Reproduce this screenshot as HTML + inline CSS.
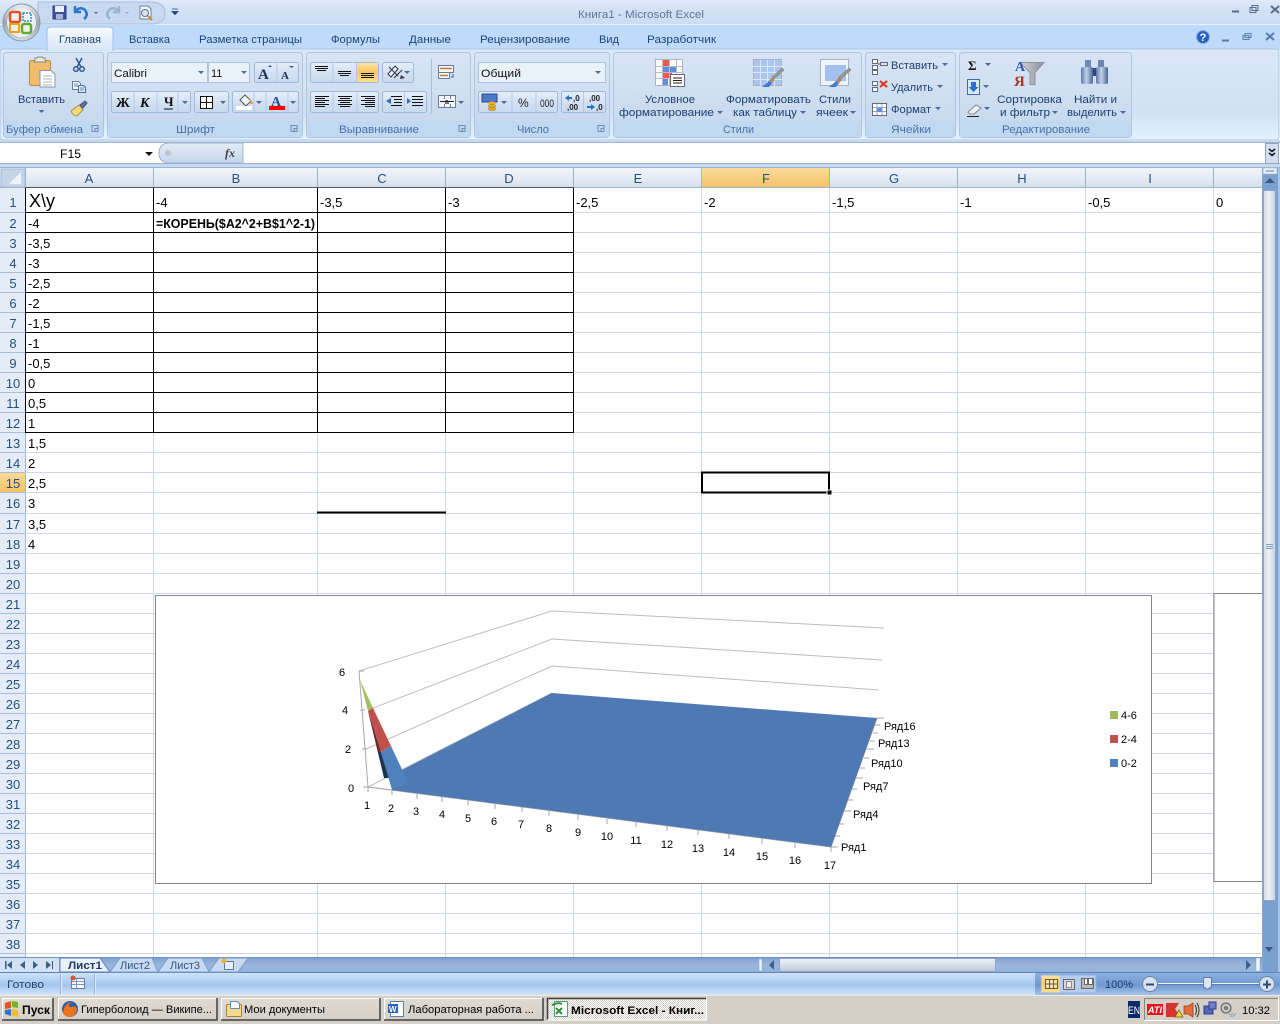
<!DOCTYPE html>
<html lang="ru"><head><meta charset="utf-8"><title>Книга1 - Microsoft Excel</title>
<style>
html,body{margin:0;padding:0;width:1280px;height:1024px;overflow:hidden;background:#fff}
svg{display:block;position:absolute;left:0;top:0}
text{font-family:"Liberation Sans","DejaVu Sans",sans-serif;font-size:11px;fill:#1c3f70}
.t{fill:#1d4477;font-size:11px}
.g{fill:#4a6fa5;font-size:11px}
.c{fill:#000;font-size:13px}
.h{fill:#24507f;font-size:13px;text-anchor:middle}
.ch{fill:#111;font-size:11px}
.tb{fill:#000;font-size:11px}
.box{fill:#e9f1fb;stroke:#abc3e0}
.bt{fill:url(#btn);stroke:#9fb9d8}
.grp{fill:url(#grp);stroke:#aec6e2}
.str{fill:#c1d8f1}
.a{fill:#4a6a97}
</style></head><body>
<svg width="1280" height="1024" viewBox="0 0 1280 1024" xmlns="http://www.w3.org/2000/svg">
<defs>
<linearGradient id="title" x1="0" x2="0" y1="0" y2="1"><stop offset="0" stop-color="#dfeafa"/><stop offset=".35" stop-color="#d3e2f5"/><stop offset="1" stop-color="#cadcf3"/></linearGradient>
<linearGradient id="rib" x1="0" x2="0" y1="0" y2="1"><stop offset="0" stop-color="#dbe7f6"/><stop offset=".7" stop-color="#d0e1f4"/><stop offset="1" stop-color="#e3f3fd"/></linearGradient>
<linearGradient id="grp" x1="0" x2="0" y1="0" y2="1"><stop offset="0" stop-color="#d8e4f4"/><stop offset="1" stop-color="#c5d8ee"/></linearGradient>
<linearGradient id="btn" x1="0" x2="0" y1="0" y2="1"><stop offset="0" stop-color="#e6effa"/><stop offset=".5" stop-color="#d3e1f3"/><stop offset="1" stop-color="#c8daf0"/></linearGradient>
<linearGradient id="org" x1="0" x2="0" y1="0" y2="1"><stop offset="0" stop-color="#fde4a8"/><stop offset=".45" stop-color="#fbc862"/><stop offset="1" stop-color="#fde08e"/></linearGradient>
<linearGradient id="hd" x1="0" x2="0" y1="0" y2="1"><stop offset="0" stop-color="#f2f6fb"/><stop offset=".6" stop-color="#e2e9f3"/><stop offset="1" stop-color="#d3deec"/></linearGradient>
<linearGradient id="hdo" x1="0" x2="0" y1="0" y2="1"><stop offset="0" stop-color="#fbdc9e"/><stop offset="1" stop-color="#f5c162"/></linearGradient>
<linearGradient id="tab" x1="0" x2="0" y1="0" y2="1"><stop offset="0" stop-color="#f6fafe"/><stop offset="1" stop-color="#d8e6f6"/></linearGradient>
<linearGradient id="sb" x1="0" x2="0" y1="0" y2="1"><stop offset="0" stop-color="#cfe2f9"/><stop offset=".3" stop-color="#b6d3f3"/><stop offset=".55" stop-color="#a5c6ee"/><stop offset="1" stop-color="#d2e5f9"/></linearGradient>
<linearGradient id="sb2" x1="0" x2="0" y1="0" y2="1"><stop offset="0" stop-color="#8db1e2"/><stop offset=".55" stop-color="#6f98d0"/><stop offset="1" stop-color="#a5c4ec"/></linearGradient>
<linearGradient id="tbar" x1="0" x2="0" y1="0" y2="1"><stop offset="0" stop-color="#7d9fce"/><stop offset=".5" stop-color="#9ab7dc"/><stop offset="1" stop-color="#94b1d8"/></linearGradient>
<linearGradient id="thumbH" x1="0" x2="0" y1="0" y2="1"><stop offset="0" stop-color="#eef2f8"/><stop offset=".5" stop-color="#d5deeb"/><stop offset="1" stop-color="#bcc9dc"/></linearGradient>
<linearGradient id="thumbV" x1="0" x2="1" y1="0" y2="0"><stop offset="0" stop-color="#d0d9e6"/><stop offset=".45" stop-color="#eef2f8"/><stop offset="1" stop-color="#c4d0e0"/></linearGradient>
<linearGradient id="orb" x1="0" x2="0" y1="0" y2="1"><stop offset="0" stop-color="#e8edf2"/><stop offset=".5" stop-color="#9aa6b2"/><stop offset="1" stop-color="#d2dae2"/></linearGradient>
<linearGradient id="fx" x1="0" x2="0" y1="0" y2="1"><stop offset="0" stop-color="#e4ecf7"/><stop offset="1" stop-color="#c4d6ec"/></linearGradient>
<linearGradient id="tbtn" x1="0" x2="0" y1="0" y2="1"><stop offset="0" stop-color="#dfdbd3"/><stop offset="1" stop-color="#d4d0c8"/></linearGradient>
<linearGradient id="bino" x1="0" x2="1" y1="0" y2="0"><stop offset="0" stop-color="#5d78a8"/><stop offset=".45" stop-color="#c3d2e8"/><stop offset="1" stop-color="#4a6494"/></linearGradient>
<linearGradient id="funnel" x1="0" x2="1" y1="0" y2="0"><stop offset="0" stop-color="#d0d4da"/><stop offset="1" stop-color="#8d939d"/></linearGradient>
<pattern id="dith" width="2" height="2" patternUnits="userSpaceOnUse"><rect width="2" height="2" fill="#fff"/><rect width="1" height="1" fill="#d4d0c8"/><rect x="1" y="1" width="1" height="1" fill="#d4d0c8"/></pattern>
</defs>

<!-- window chrome -->
<rect width="1280" height="25" fill="url(#title)"/>
<rect y="24" width="1280" height="1" fill="#eaf2fc"/>
<rect y="25" width="1280" height="25" fill="#bfdbfb"/>
<rect x="0" y="49" width="1279" height="91" rx="3" fill="url(#rib)" stroke="#a9c5e6"/>

<!-- quick access -->
<path d="M38 2H150Q165 2 165 13Q165 24 150 24H38Z" fill="#c7daf2" stroke="#a7bfdd"/>
<rect x="53" y="6" width="13" height="13" fill="#3d53a0" stroke="#2c3f85"/><rect x="55" y="6" width="9" height="6" fill="#eef"/><rect x="56" y="14" width="7" height="5" fill="#aab3d6"/>
<path d="M76 11Q80 6 85 10Q89 15 84 19M75 6V12H81" fill="none" stroke="#2f74c9" stroke-width="2.5"/>
<path d="M94 12l4 0-2 2Z" class="a"/>
<path d="M118 11Q114 6 109 10Q105 15 110 19M119 6V12H113" fill="none" stroke="#9fb3cb" stroke-width="2.5"/>
<path d="M125 12l4 0-2 2Z" fill="#93a7c1"/>
<path d="M140 6h8l3 3v10h-11Z" fill="#f6f8fb" stroke="#6e7f99"/><circle cx="145" cy="13" r="3.5" fill="#d4e6f8" stroke="#5d6d85"/><path d="M148 16l4 4" stroke="#c8862a" stroke-width="2"/>
<path d="M172 9h6M172 11.500l6 0 -3 3Z" fill="#26426e" stroke="#26426e" stroke-width=".8"/>

<!-- office button -->
<circle cx="21.500" cy="22.500" r="18.500" fill="url(#orb)" stroke="#8a96a4"/>
<circle cx="21.500" cy="22.500" r="14.500" fill="#eef1f3"/>
<rect x="10" y="12" width="10" height="10" rx="2" fill="none" stroke="#e0521f" stroke-width="2.500"/>
<rect x="23" y="13" width="8" height="8" fill="none" stroke="#2f8fd2" stroke-width="1.500" stroke-dasharray="2 1"/>
<rect x="10" y="24" width="9" height="8" fill="none" stroke="#f0a020" stroke-width="2"/>
<rect x="22" y="24" width="9" height="9" rx="2" fill="none" stroke="#5bab2d" stroke-width="2.500"/>

<text x="578" y="18" font-size="11" textLength="126" lengthAdjust="spacingAndGlyphs" style="fill:#5f7693">Книга1  -  Microsoft Excel</text>
<g stroke="#5a6d88" fill="none"><path d="M1232 11.500h7" stroke-width="2"/><rect x="1250" y="7.500" width="6" height="5"/><rect x="1252" y="5.500" width="6" height="5"/><path d="M1271 6l8 7M1279 6l-8 7" stroke-width="2"/></g>

<!-- tabs -->
<path d="M47 50V31Q47 27 51 27H109Q113 27 113 31V50Z" fill="url(#tab)" stroke="#a3c1e3"/>
<rect x="48" y="48" width="64" height="3" fill="#dbe7f6"/>
<g class="t">
<text class="t" x="59" y="43" textLength="42" lengthAdjust="spacingAndGlyphs">Главная</text>
<text class="t" x="129" y="43" textLength="41" lengthAdjust="spacingAndGlyphs">Вставка</text>
<text class="t" x="199" y="43" textLength="103" lengthAdjust="spacingAndGlyphs">Разметка страницы</text>
<text class="t" x="331" y="43" textLength="49" lengthAdjust="spacingAndGlyphs">Формулы</text>
<text class="t" x="409" y="43" textLength="42" lengthAdjust="spacingAndGlyphs">Данные</text>
<text class="t" x="480" y="43" textLength="90" lengthAdjust="spacingAndGlyphs">Рецензирование</text>
<text class="t" x="599" y="43" textLength="20" lengthAdjust="spacingAndGlyphs">Вид</text>
<text class="t" x="647" y="43" textLength="69" lengthAdjust="spacingAndGlyphs">Разработчик</text>
</g>
<circle cx="1203" cy="37" r="6.500" fill="#2a62c4" stroke="#8fb0dc"/><text x="1203" y="41" text-anchor="middle" style="fill:#fff;font-size:11px;font-weight:bold">?</text>
<g stroke="#5a7da8" fill="none"><path d="M1222 40.500h7" stroke-width="2"/><rect x="1243" y="35.500" width="6" height="4"/><rect x="1245" y="33.500" width="6" height="4"/><path d="M1266 33l8 7M1274 33l-8 7" stroke-width="2"/></g>

<!-- groups -->
<rect class="grp" x="3.500" y="52.500" width="100" height="85" rx="3"/><rect class="str" x="4" y="121" width="99" height="16"/>
<rect class="grp" x="107.500" y="52.500" width="195" height="85" rx="3"/><rect class="str" x="108" y="121" width="194" height="16"/>
<rect class="grp" x="306.500" y="52.500" width="164" height="85" rx="3"/><rect class="str" x="307" y="121" width="163" height="16"/>
<rect class="grp" x="474.500" y="52.500" width="135" height="85" rx="3"/><rect class="str" x="475" y="121" width="134" height="16"/>
<rect class="grp" x="613.500" y="52.500" width="248" height="85" rx="3"/><rect class="str" x="614" y="121" width="247" height="16"/>
<rect class="grp" x="865.500" y="52.500" width="90" height="85" rx="3"/><rect class="str" x="866" y="121" width="89" height="16"/>
<rect class="grp" x="959.500" y="52.500" width="172" height="85" rx="3"/><rect class="str" x="960" y="121" width="171" height="16"/>

<text class="g" x="6" y="133" textLength="77" lengthAdjust="spacingAndGlyphs">Буфер обмена</text>
<text class="g" x="176" y="133" textLength="39" lengthAdjust="spacingAndGlyphs">Шрифт</text>
<text class="g" x="339" y="133" textLength="80" lengthAdjust="spacingAndGlyphs">Выравнивание</text>
<text class="g" x="517" y="133" textLength="32" lengthAdjust="spacingAndGlyphs">Число</text>
<text class="g" x="723" y="133" textLength="31" lengthAdjust="spacingAndGlyphs">Стили</text>
<text class="g" x="891" y="133" textLength="40" lengthAdjust="spacingAndGlyphs">Ячейки</text>
<text class="g" x="1002" y="133" textLength="88" lengthAdjust="spacingAndGlyphs">Редактирование</text>
<g fill="none" stroke="#6f8cb3"><path d="M92 125.500h6v6h-6zM95 128.500h3v3h-3z"/><path d="M291 125.500h6v6h-6zM294 128.500h3v3h-3z"/><path d="M459 125.500h6v6h-6zM462 128.500h3v3h-3z"/><path d="M598 125.500h6v6h-6zM601 128.500h3v3h-3z"/></g>

<!-- clipboard -->
<rect x="29.500" y="60.500" width="21" height="25" rx="2" fill="#f1bd6c" stroke="#b98a3f"/>
<path d="M35 60V58h2l1-1h4l1 1h2v2l1 2h-12Z" fill="#e8e8e4" stroke="#8d8d80"/>
<path d="M40 70.500h11l4 4v12.500h-15Z" fill="#fff" stroke="#8b97a8"/>
<path d="M43 76h9M43 79h9M43 82h9M43 85h9" stroke="#a9b4c2"/>
<text x="18" y="103" textLength="47" lengthAdjust="spacingAndGlyphs">Вставить</text>
<path d="M38.500 110h6l-3 3Z" class="a"/>
<g fill="none" stroke="#2f5793" stroke-width="1.500"><path d="M76 58l5 9M82 58l-5 9"/><circle cx="76" cy="69" r="2.300"/><circle cx="82" cy="69" r="2.300"/></g>
<path d="M72.500 81.500h6l2 2v6h-8Z" fill="#fff" stroke="#5e80ad"/><path d="M78.500 85.500h5l2 2v5h-7Z" fill="#e6f0fb" stroke="#3f68a0"/><path d="M74 84h4M74 86h4M80 88h4M80 90h4" stroke="#5e80ad"/>
<path d="M71 111l8-6 4 5-6 6q-4 0-6-5Z" fill="#f2d97f" stroke="#a7904a"/><path d="M80 105l5-4 2 2-4 5Z" fill="#6a6fa0" stroke="#4c4f7a"/>

<!-- font -->
<rect class="box" x="111.500" y="62.500" width="96" height="20"/><rect class="box" x="208.500" y="62.500" width="41" height="20"/>
<text class="ch" x="114" y="77" textLength="33" lengthAdjust="spacingAndGlyphs">Calibri</text>
<text class="ch" x="211" y="77">11</text>
<path d="M198 71h6l-3 3Z" class="a"/><path d="M241 71h6l-3 3Z" class="a"/>
<rect class="bt" x="254.500" y="62.500" width="44" height="20" rx="2"/><path d="M277 63v19" stroke="#b5c9e2"/>
<text x="258" y="79" style="font-family:'Liberation Serif',serif;font-weight:bold;font-size:15px;fill:#20304f">A</text>
<path d="M268 67l2-2 2 2Z" fill="#2d5a9e"/>
<text x="281" y="79" style="font-family:'Liberation Serif',serif;font-weight:bold;font-size:11px;fill:#20304f">A</text>
<path d="M289 66h5l-2.500 2Z" fill="#2d5a9e"/>
<rect class="bt" x="111.500" y="91.500" width="79" height="21" rx="2"/><path d="M134 92v20M157 92v20M178 92v20" stroke="#b5c9e2"/>
<text x="116" y="107" style="font-family:'Liberation Serif',serif;font-weight:bold;font-size:14px;fill:#111">Ж</text>
<text x="140" y="107" style="font-family:'Liberation Serif',serif;font-weight:bold;font-style:italic;font-size:14px;fill:#111">К</text>
<text x="164" y="106" style="font-family:'Liberation Serif',serif;font-weight:bold;font-size:13px;fill:#111">Ч</text><path d="M164 109h9" stroke="#111"/>
<path d="M182 101h6l-3 3Z" class="a"/>
<rect class="bt" x="194.500" y="91.500" width="34" height="21" rx="2"/><path d="M200.500 96.500h12v12h-12zM206.500 96.500v12M200.500 102.500h12" fill="#fff" stroke="#111"/><path d="M220 101h6l-3 3Z" class="a"/>
<rect class="bt" x="232.500" y="91.500" width="66" height="21" rx="2"/><path d="M254 92v20M266 92v20M288 92v20" stroke="#b5c9e2"/>
<path d="M240 100l5-5 6 6-5 5Z" fill="#f4f7fb" stroke="#555"/><path d="M249 98l3 4 1 2-2 0Z" fill="#e8941f"/>
<rect x="236" y="106" width="16" height="4" fill="#fff"/>
<path d="M256 101h6l-3 3Z" class="a"/>
<text x="271" y="106" style="font-family:'Liberation Serif',serif;font-weight:bold;font-size:14px;fill:#26508f">A</text><rect x="269" y="106" width="16" height="4" fill="#f00"/>
<path d="M290 101h6l-3 3Z" class="a"/>

<!-- alignment -->
<rect class="bt" x="310.500" y="62.500" width="68" height="20" rx="2"/><rect x="357" y="63" width="21" height="19" fill="url(#org)"/><path d="M333 63v19M356.500 63v19" stroke="#b5c9e2"/>
<g stroke="#111"><path d="M315 66.500h13M315 68.500h13M317 70.500h9"/><path d="M338 71.500h13M338 73.500h13M340 75.500h9"/><path d="M361 73.500h13M361 75.500h13M361 77.500h13"/></g>
<rect class="bt" x="382.500" y="62.500" width="31" height="20" rx="2"/>
<path d="M388 74l7-8 3 3-7 8ZM394 78l8-8M389 67l9 9" stroke="#334" stroke-width="1" fill="#eef2f8"/><path d="M401 75l4 3-5 1Z" fill="#334"/><path d="M404 71h6l-3 3Z" class="a"/>
<rect class="bt" x="310.500" y="91.500" width="68" height="21" rx="2"/><path d="M333 92v20M357 92v20" stroke="#b5c9e2"/>
<g stroke="#111"><path d="M315 96.500h14M315 98.500h10M315 100.500h14M315 102.500h10M315 104.500h14M315 106.500h10"/><path d="M338 96.500h14M340 98.500h10M338 100.500h14M340 102.500h10M338 104.500h14M340 106.500h10"/><path d="M361 96.500h14M365 98.500h10M361 100.500h14M365 102.500h10M361 104.500h14M365 106.500h10"/></g>
<rect class="bt" x="382.500" y="91.500" width="44" height="21" rx="2"/><path d="M404.500 92v20" stroke="#b5c9e2"/>
<g stroke="#111"><path d="M391 96.500h11M394 99.500h8M394 102.500h8M391 105.500h11"/><path d="M412 96.500h11M412 99.500h11M412 102.500h11M412 105.500h11"/></g>
<path d="M386 101l5-3v6Z" fill="#2b70c0"/><path d="M411 101l-4-3v6Z" fill="#2b70c0"/>
<path d="M431.500 59v55" stroke="#a8bedb"/>
<rect x="438.500" y="65.500" width="15" height="7" fill="#f4f7fb" stroke="#6a7c96"/><rect x="438.500" y="72.500" width="11" height="6" fill="#f4f7fb" stroke="#6a7c96"/><path d="M440 68.500h12" stroke="#c47c2d" stroke-width="1.500"/><path d="M440 75.500h8" stroke="#c47c2d" stroke-width="1.500"/><path d="M453 74v3h-2" fill="none" stroke="#2b5fa8"/>
<rect x="438.500" y="95.500" width="17" height="12" fill="#f4f7fb" stroke="#6a7c96"/><path d="M444.500 96v3M450.500 96v3M444.500 104v3M450.500 104v3" stroke="#6a7c96"/><path d="M440 101.500h14" stroke="#223"/><text x="445" y="104" style="font-size:7px;font-weight:bold;fill:#223">a</text><path d="M458 101h6l-3 3Z" class="a"/>

<!-- number -->
<rect class="box" x="478.500" y="62.500" width="127" height="20"/>
<text class="ch" x="481" y="77" textLength="40" lengthAdjust="spacingAndGlyphs">Общий</text>
<path d="M595 71h6l-3 3Z" class="a"/>
<rect class="bt" x="478.500" y="91.500" width="79" height="21" rx="2"/><path d="M512 92v20M536 92v20" stroke="#b5c9e2"/>
<rect x="482" y="94" width="15" height="8" fill="#4b78c8" stroke="#2b4a90"/><ellipse cx="492" cy="103" rx="4" ry="1.500" fill="#e8ad2a"/><ellipse cx="492" cy="106" rx="4" ry="1.500" fill="#e8ad2a" stroke="#a87515" stroke-width=".5"/><ellipse cx="492" cy="109" rx="4" ry="1.500" fill="#e8ad2a" stroke="#a87515" stroke-width=".5"/>
<path d="M501 101h6l-3 3Z" class="a"/>
<text x="518" y="107" style="font-size:12px;fill:#222">%</text>
<text x="540" y="107" textLength="14" lengthAdjust="spacingAndGlyphs" style="font-size:11px;fill:#222">000</text>
<rect class="bt" x="561.500" y="91.500" width="44" height="21" rx="2"/><path d="M583.500 92v20" stroke="#b5c9e2"/>
<text x="573" y="101" style="font-size:8px;fill:#222;font-weight:bold">,0</text><text x="567" y="110" style="font-size:8px;fill:#222;font-weight:bold">,00</text>
<text x="589" y="101" style="font-size:8px;fill:#222;font-weight:bold">,00</text><text x="596" y="110" style="font-size:8px;fill:#222;font-weight:bold">,0</text>
<path d="M565 98l4-3v2h3v2h-3v2Z" fill="#2b70c0"/><path d="M587 106h4v-2l4 3-4 3v-2h-4Z" fill="#2b70c0"/>

<!-- styles -->
<rect x="655.500" y="59.500" width="27" height="26" fill="#fff" stroke="#a8b2c0"/>
<rect x="662" y="60" width="7" height="6" fill="#f05a4a"/><rect x="662" y="66" width="14" height="6" fill="#5d8fdd"/><rect x="662" y="72" width="10" height="6" fill="#f05a4a"/><rect x="662" y="78" width="6" height="7" fill="#5d8fdd"/>
<path d="M662.500 60v25M669.500 60v25M676.500 60v25M656 66.500h26M656 72.500h26M656 78.500h26" stroke="#b2bccb"/>
<rect x="670.500" y="74.500" width="14" height="12" fill="#fff" stroke="#667"/><path d="M673 78h9M673 80.500h9M673 83h9" stroke="#222"/>
<rect x="753.500" y="59.500" width="28" height="26" fill="#a9c5f0" stroke="#a8b2c0"/><path d="M753 66.500h29M753 72.500h29M753 79.500h29M760.500 60v26M767.500 60v26M774.500 60v26" stroke="#dde6f5"/>
<path d="M784 70l-10 9-2-2 10-9Z" fill="#9a9a90" stroke="#6b6b60" stroke-width=".5"/><path d="M772 77l3 3-3 3-3-2Z" fill="#b08a5a"/><path d="M769 81l3 2-3 4-7 0 5-4Z" fill="#4479c9"/>
<rect x="820.500" y="59.500" width="28" height="26" fill="#eef4fc" stroke="#a8b2c0"/><rect x="825" y="65" width="21" height="16" fill="#a3c0ee"/>
<path d="M851 70l-10 9-2-2 10-9Z" fill="#9a9a90" stroke="#6b6b60" stroke-width=".5"/><path d="M839 77l3 3-3 3-3-2Z" fill="#b08a5a"/><path d="M836 81l3 2-3 4-7 0 5-4Z" fill="#4479c9"/>
<text x="645" y="103" textLength="50" lengthAdjust="spacingAndGlyphs">Условное</text>
<text x="619" y="116" textLength="95" lengthAdjust="spacingAndGlyphs">форматирование</text><path d="M717 111h6l-3 3Z" class="a"/>
<text x="726" y="103" textLength="85" lengthAdjust="spacingAndGlyphs">Форматировать</text>
<text x="733" y="116" textLength="64" lengthAdjust="spacingAndGlyphs">как таблицу</text><path d="M800 111h6l-3 3Z" class="a"/>
<text x="819" y="103" textLength="32" lengthAdjust="spacingAndGlyphs">Стили</text>
<text x="816" y="116" textLength="32" lengthAdjust="spacingAndGlyphs">ячеек</text><path d="M850 111h6l-3 3Z" class="a"/>

<!-- cells -->
<g stroke="#5a6d85" fill="#fff"><rect x="872.500" y="59.500" width="5" height="4"/><rect x="872.500" y="65.500" width="5" height="4"/><rect x="872.500" y="70.500" width="5" height="4"/><rect x="880.500" y="62.500" width="7" height="3" fill="#d8e4f5"/></g><path d="M878 64h3" stroke="#c22"/>
<text x="891" y="69" textLength="47" lengthAdjust="spacingAndGlyphs">Вставить</text><path d="M942 63h6l-3 3Z" class="a"/>
<g stroke="#5a6d85" fill="#fff"><rect x="872.500" y="81.500" width="5" height="4"/><rect x="872.500" y="87.500" width="5" height="4"/></g><path d="M880 81l7 6M887 81l-7 6" stroke="#e0321e" stroke-width="2"/>
<text x="891" y="91" textLength="42" lengthAdjust="spacingAndGlyphs">Удалить</text><path d="M937 85h6l-3 3Z" class="a"/>
<rect x="872.500" y="103.500" width="14" height="12" fill="#fff" stroke="#5a6d85"/><path d="M877 104v11M882 104v11M873 107.500h13M873 111.500h13" stroke="#98a5b8"/><rect x="877" y="108" width="5" height="4" fill="#5d8fdd"/>
<text x="891" y="113" textLength="40" lengthAdjust="spacingAndGlyphs">Формат</text><path d="M935 107h6l-3 3Z" class="a"/>

<!-- editing -->
<text x="968" y="70" style="font-family:'Liberation Serif',serif;font-size:13px;font-weight:bold;fill:#111">Σ</text><path d="M985 63h6l-3 3Z" class="a"/>
<rect x="967.500" y="79.500" width="12" height="15" fill="#dbe8f8" stroke="#3f6cb0"/><path d="M971 82h5v5h2.500l-5 5-5-5h2.500Z" fill="#2b70d0"/><path d="M983 85h6l-3 3Z" class="a"/>
<path d="M968 112l8-7 5 3-7 6h-4Z" fill="#eef1f5" stroke="#7d8894"/><path d="M967 116.500h12" stroke="#222"/><path d="M984 107h6l-3 3Z" class="a"/>
<path d="M1020 62.500h24l-9 10v12l-5 0v-12Z" fill="url(#funnel)" stroke="#8d939d"/>
<text x="1015" y="71" style="font-family:'Liberation Serif',serif;font-size:14px;font-weight:bold;fill:#2f5aa8">A</text>
<text x="1014" y="86" style="font-family:'Liberation Serif',serif;font-size:15px;font-weight:bold;fill:#a33a2c">Я</text>
<path d="M1085 60h6v7h-6ZM1098 60h6v7h-6Z" fill="#6f87b3"/>
<rect x="1081" y="67" width="12" height="17" rx="2" fill="url(#bino)"/><rect x="1096" y="67" width="12" height="17" rx="2" fill="url(#bino)"/><rect x="1093" y="68" width="3" height="8" fill="#2f4777"/>
<text x="997" y="103" textLength="65" lengthAdjust="spacingAndGlyphs">Сортировка</text>
<text x="1000" y="116" textLength="50" lengthAdjust="spacingAndGlyphs">и фильтр</text><path d="M1052 111h6l-3 3Z" class="a"/>
<text x="1074" y="103" textLength="43" lengthAdjust="spacingAndGlyphs">Найти и</text>
<text x="1067" y="116" textLength="50" lengthAdjust="spacingAndGlyphs">выделить</text><path d="M1120 111h6l-3 3Z" class="a"/>

<!-- formula bar -->
<rect y="140" width="1280" height="28" fill="#c6d9f0"/>
<rect x="0" y="143" width="1280" height="21" fill="#fff"/>
<path d="M0 142.500H1280M0 163.500H1280M0 167.500H1280" stroke="#9db4cf"/>
<text x="60" y="158" textLength="21" lengthAdjust="spacingAndGlyphs" style="fill:#000;font-size:12px">F15</text>
<path d="M145 152h8l-4 4Z" fill="#111"/>
<path d="M243 143H170Q159 143 159 153Q159 163 170 163H243Z" fill="url(#fx)" stroke="#9db4cf"/>
<circle cx="168" cy="153" r="3" fill="#b9c5d3"/>
<text x="225" y="157" style="font-family:'Liberation Serif',serif;font-style:italic;font-weight:bold;font-size:12px;fill:#444">fx</text>
<rect x="1265.500" y="143.500" width="13" height="20" fill="#d0dff2" stroke="#8da6c4"/>
<path d="M1269 149l3 2.500 3-2.500M1269 153l3 2.500 3-2.500" fill="none" stroke="#111" stroke-width="1.500"/>

<!-- grid -->
<rect x="0" y="168" width="1262" height="20" fill="url(#hd)"/>
<rect x="0" y="188" width="25" height="769" fill="#e4ecf7"/>
<rect x="701" y="168" width="129" height="20" fill="url(#hdo)"/>
<rect x="0" y="472" width="25" height="21" fill="url(#hdo)"/>
<rect x="1" y="169" width="24" height="18" fill="#c4d5ea" stroke="#a5bcd8"/>
<path d="M21 172v12h-12Z" fill="#eef3fa"/>
<path d="M25.500 168V957M153.500 168V188M317.500 168V188M445.500 168V188M573.500 168V188M701.500 168V188M829.500 168V188M957.500 168V188M1085.500 168V188M1213.500 168V188" stroke="#9eb6ce"/>
<path d="M153.500 188V957M317.500 188V957M445.500 188V957M573.500 188V957M701.500 188V957M829.500 188V957M957.500 188V957M1085.500 188V957M1213.500 188V957" stroke="#d0d7e5"/>
<path d="M25 212.500H1262M25 232.500H1262M25 252.500H1262M25 272.500H1262M25 292.500H1262M25 312.500H1262M25 332.500H1262M25 352.500H1262M25 372.500H1262M25 392.500H1262M25 412.500H1262M25 432.500H1262M25 452.500H1262M25 472.500H1262M25 492.500H1262M25 513.500H1262M25 533.500H1262M25 553.500H1262M25 573.500H1262M25 593.500H1262M25 613.500H1262M25 633.500H1262M25 653.500H1262M25 673.500H1262M25 693.500H1262M25 713.500H1262M25 733.500H1262M25 753.500H1262M25 773.500H1262M25 793.500H1262M25 813.500H1262M25 833.500H1262M25 853.500H1262M25 873.500H1262M25 893.500H1262M25 913.500H1262M25 933.500H1262M25 953.500H1262" stroke="#d0d7e5"/>
<path d="M0 212.500H25M0 232.500H25M0 252.500H25M0 272.500H25M0 292.500H25M0 312.500H25M0 332.500H25M0 352.500H25M0 372.500H25M0 392.500H25M0 412.500H25M0 432.500H25M0 452.500H25M0 472.500H25M0 492.500H25M0 513.500H25M0 533.500H25M0 553.500H25M0 573.500H25M0 593.500H25M0 613.500H25M0 633.500H25M0 653.500H25M0 673.500H25M0 693.500H25M0 713.500H25M0 733.500H25M0 753.500H25M0 773.500H25M0 793.500H25M0 813.500H25M0 833.500H25M0 853.500H25M0 873.500H25M0 893.500H25M0 913.500H25M0 933.500H25M0 953.500H25" stroke="#a9bdd4"/>
<path d="M0 187.500H1262" stroke="#9eb6ce"/>
<path d="M25.500 188V432M153.500 188V432M317.500 188V432M445.500 188V432M573.500 188V432M25 212.500H574M25 232.500H574M25 252.500H574M25 272.500H574M25 292.500H574M25 312.500H574M25 332.500H574M25 352.500H574M25 372.500H574M25 392.500H574M25 412.500H574M25 432.500H574" stroke="#000"/>
<path d="M25 187.500H574" stroke="#4a5a70"/>
<path d="M317 512.500H446" stroke="#000" stroke-width="2"/>
<rect x="702" y="472.500" width="127" height="20" fill="none" stroke="#000" stroke-width="2"/><rect x="827" y="490" width="5" height="5" fill="#000" stroke="#fff"/>

<!-- column headers -->
<text class="h" x="89" y="183">A</text><text class="h" x="236" y="183">B</text><text class="h" x="382" y="183">C</text><text class="h" x="509" y="183">D</text><text class="h" x="638" y="183">E</text><text class="h" x="766" y="183">F</text><text class="h" x="894" y="183">G</text><text class="h" x="1022" y="183">H</text><text class="h" x="1150" y="183">I</text>
<!-- row headers -->
<text class="h" x="13" y="207">1</text><text class="h" x="13" y="228">2</text><text class="h" x="13" y="248">3</text><text class="h" x="13" y="268">4</text><text class="h" x="13" y="288">5</text><text class="h" x="13" y="308">6</text><text class="h" x="13" y="328">7</text><text class="h" x="13" y="348">8</text><text class="h" x="13" y="368">9</text><text class="h" x="13" y="388">10</text><text class="h" x="13" y="408">11</text><text class="h" x="13" y="428">12</text><text class="h" x="13" y="448">13</text><text class="h" x="13" y="468">14</text><text class="h" x="13" y="488">15</text><text class="h" x="13" y="508">16</text><text class="h" x="13" y="529">17</text><text class="h" x="13" y="549">18</text><text class="h" x="13" y="569">19</text><text class="h" x="13" y="589">20</text><text class="h" x="13" y="609">21</text><text class="h" x="13" y="629">22</text><text class="h" x="13" y="649">23</text><text class="h" x="13" y="669">24</text><text class="h" x="13" y="689">25</text><text class="h" x="13" y="709">26</text><text class="h" x="13" y="729">27</text><text class="h" x="13" y="749">28</text><text class="h" x="13" y="769">29</text><text class="h" x="13" y="789">30</text><text class="h" x="13" y="809">31</text><text class="h" x="13" y="829">32</text><text class="h" x="13" y="849">33</text><text class="h" x="13" y="869">34</text><text class="h" x="13" y="889">35</text><text class="h" x="13" y="909">36</text><text class="h" x="13" y="929">37</text><text class="h" x="13" y="949">38</text>
<!-- cells -->
<text class="c" x="29" y="207" style="font-size:18px" textLength="26" lengthAdjust="spacingAndGlyphs">X\y</text>
<text class="c" x="156" y="207">-4</text><text class="c" x="320" y="207">-3,5</text><text class="c" x="448" y="207">-3</text><text class="c" x="576" y="207">-2,5</text><text class="c" x="704" y="207">-2</text><text class="c" x="832" y="207">-1,5</text><text class="c" x="960" y="207">-1</text><text class="c" x="1088" y="207">-0,5</text><text class="c" x="1216" y="207">0</text>
<text class="c" x="28" y="228">-4</text><text class="c" x="28" y="248">-3,5</text><text class="c" x="28" y="268">-3</text><text class="c" x="28" y="288">-2,5</text><text class="c" x="28" y="308">-2</text><text class="c" x="28" y="328">-1,5</text><text class="c" x="28" y="348">-1</text><text class="c" x="28" y="368">-0,5</text><text class="c" x="28" y="388">0</text><text class="c" x="28" y="408">0,5</text><text class="c" x="28" y="428">1</text><text class="c" x="28" y="448">1,5</text><text class="c" x="28" y="468">2</text><text class="c" x="28" y="488">2,5</text><text class="c" x="28" y="508">3</text><text class="c" x="28" y="529">3,5</text><text class="c" x="28" y="549">4</text>
<text class="c" x="156" y="228" textLength="159" lengthAdjust="spacingAndGlyphs" style="font-weight:bold">=КОРЕНЬ($A2^2+B$1^2-1)</text>

<!-- second box -->
<rect x="1214" y="593.500" width="60" height="288" fill="#fff" stroke="#868686"/>
<!-- chart -->
<rect x="155.500" y="595.500" width="996" height="288" fill="#fff" stroke="#868686"/>
<g fill="none" stroke="#bdbdbd">
<path d="M359 671L552 611L884 628"/><path d="M368 710L552 639L882 660"/><path d="M366 749L552 666L879 690"/><path d="M368 787L552 693"/>
</g>
<path d="M359 671L368 787L831 847L877 718" fill="none" stroke="#a6a6a6"/>
<path d="M364 671h-5M365 710h-5M367 749h-5M368 787h-5" stroke="#a6a6a6"/>
<path d="M368 787v5M392 790v5M417 794v5M442 797v5M468 800v5M495 804v5M522 807v5M549 811v5M578 815v5M607 819v5M636 822v5M667 826v5M698 830v5M729 834v5M762 839v5M795 843v5M831 847v5" stroke="#a6a6a6"/>
<path d="M831 847h7M835 836h5M839 824h5M844 811h7M848 800h5M852 789h5M856 778h7M860 768h5M864 758h5M867 749h7M870 741h5M873 733h5M877 718h7M875 725h5" stroke="#a6a6a6"/>
<path d="M402 770L552 693L877 718L831 847L392 790Z" fill="#4f79b3"/>
<path d="M368 711L381 752L389 778L384 778Z" fill="#1d3553"/>
<path d="M368 711L381 752L378 752Z" fill="#6b2a28"/>
<path d="M360 680L373 708L368 711Z" fill="#a3bf5e"/>
<path d="M368 711L373 708L391 746L381 752Z" fill="#c0504d"/>
<path d="M381 752L391 746L408 782L392 790Z" fill="#4f81bd"/>
<g style="font-size:11px">
<text class="tb" x="342" y="676" text-anchor="middle">6</text><text class="tb" x="345" y="714" text-anchor="middle">4</text><text class="tb" x="348" y="753" text-anchor="middle">2</text><text class="tb" x="351" y="792" text-anchor="middle">0</text>
<text class="tb" x="367" y="809" text-anchor="middle">1</text><text class="tb" x="391" y="812" text-anchor="middle">2</text><text class="tb" x="416" y="815" text-anchor="middle">3</text><text class="tb" x="442" y="818" text-anchor="middle">4</text><text class="tb" x="468" y="822" text-anchor="middle">5</text><text class="tb" x="494" y="825" text-anchor="middle">6</text><text class="tb" x="521" y="828" text-anchor="middle">7</text><text class="tb" x="549" y="832" text-anchor="middle">8</text><text class="tb" x="578" y="836" text-anchor="middle">9</text><text class="tb" x="607" y="840" text-anchor="middle">10</text><text class="tb" x="636" y="844" text-anchor="middle">11</text><text class="tb" x="667" y="848" text-anchor="middle">12</text><text class="tb" x="698" y="852" text-anchor="middle">13</text><text class="tb" x="729" y="856" text-anchor="middle">14</text><text class="tb" x="762" y="860" text-anchor="middle">15</text><text class="tb" x="795" y="864" text-anchor="middle">16</text><text class="tb" x="830" y="869" text-anchor="middle">17</text>
<text class="tb" x="841" y="851">Ряд1</text><text class="tb" x="853" y="818">Ряд4</text><text class="tb" x="863" y="790">Ряд7</text><text class="tb" x="871" y="767">Ряд10</text><text class="tb" x="878" y="747">Ряд13</text><text class="tb" x="884" y="730">Ряд16</text>
<text class="tb" x="1121" y="719">4-6</text><text class="tb" x="1121" y="743">2-4</text><text class="tb" x="1121" y="767">0-2</text>
</g>
<rect x="1110" y="711" width="8" height="8" fill="#9bbb59"/><rect x="1110" y="735" width="8" height="8" fill="#c0504d"/><rect x="1110" y="759" width="8" height="8" fill="#4f81bd"/>

<!-- vertical scrollbar -->
<rect x="1262" y="168" width="18" height="805" fill="#a9c4e6"/>
<rect x="1262" y="168" width="16" height="805" fill="#7ba0d0"/>
<path d="M1262.500 168V973" stroke="#8aa5c8"/>
<rect x="1263" y="168" width="14" height="6" fill="#e8eef7" stroke="#9eb6ce" stroke-width=".5"/><path d="M1266 171h8" stroke="#5d7aa3"/>
<path d="M1270 178l-5 5h10Z" fill="#3a5580"/>
<rect x="1263.500" y="190.500" width="12" height="710" rx="1" fill="url(#thumbV)" stroke="#8ea6c6"/>
<path d="M1266 544.500h7M1266 546.500h7M1266 548.500h7" stroke="#8a9fbd"/>
<path d="M1265 947h8l-4 5Z" fill="#3a5580"/>

<!-- sheet tabs bar -->
<rect x="0" y="957" width="1262" height="16" fill="url(#tbar)"/>
<path d="M0 957.500H1262" stroke="#6f93c4"/><path d="M0 972.500H1280" stroke="#5d84b8"/>
<rect x="0" y="958" width="59" height="14" fill="#d3e1f3"/>
<g fill="#3d5d8a"><path d="M5 961v8h1.500v-8ZM12 961l-5 4 5 4Z"/><path d="M25 961l-5 4 5 4Z"/><path d="M33 961l5 4-5 4Z"/><path d="M46 961l5 4-5 4ZM52 961v8h1v-8Z"/></g>
<path d="M60 958H100L110 972H60Z" fill="#e9f1fb" stroke="#5d84b8"/>
<path d="M110 972L120 958H152L158 972Z" fill="#c8daf2" stroke="#7d9fcd"/>
<path d="M158 972L168 958H202L209 972Z" fill="#c8daf2" stroke="#7d9fcd"/>
<path d="M209 972L219 958H248L238 972Z" fill="#c8daf2" stroke="#7d9fcd"/>
<text x="68" y="969" textLength="34" lengthAdjust="spacingAndGlyphs" style="font-weight:bold;fill:#1e3a68">Лист1</text>
<text x="120" y="969" textLength="30" lengthAdjust="spacingAndGlyphs" style="fill:#34557f">Лист2</text>
<text x="170" y="969" textLength="30" lengthAdjust="spacingAndGlyphs" style="fill:#34557f">Лист3</text>
<rect x="224.500" y="961.500" width="9" height="8" fill="#e7eef7" stroke="#63789a"/><circle cx="224" cy="961" r="2.500" fill="#f0b33a"/>
<!-- h scrollbar -->
<rect x="759" y="959" width="3" height="12" fill="#eef3fa" stroke="#8aa5c8" stroke-width=".5"/>
<path d="M774 960l-5 5 5 5Z" fill="#3f5f8d"/>
<rect x="779.500" y="958.500" width="216" height="13" rx="1" fill="url(#thumbH)" stroke="#8ea6c6"/>
<path d="M1246 960l5 5-5 5Z" fill="#3f5f8d"/>
<rect x="1256" y="958" width="4" height="13" fill="#eef3fa" stroke="#8aa5c8" stroke-width=".5"/>

<!-- status bar -->
<rect x="0" y="973" width="1280" height="22" fill="url(#sb)"/>
<rect x="1035" y="973" width="245" height="22" fill="url(#sb2)"/>
<path d="M60.500 974V994M94.500 974V994" stroke="#92b4dd"/><path d="M61.500 974V994M95.500 974V994" stroke="#dfecfb"/>
<text x="7" y="988" textLength="37" lengthAdjust="spacingAndGlyphs" style="fill:#25406b">Готово</text>
<rect x="71.500" y="978.500" width="13" height="10" fill="#f4f7fb" stroke="#6a7c96"/><path d="M72 981.500h12M72 984.500h12M76.500 979v9" stroke="#7a9ac9"/><circle cx="73" cy="978" r="2.500" fill="#e0503a"/>
<rect x="1041" y="975" width="55" height="18" rx="2" fill="#b5cdef" stroke="#94b1da"/>
<rect x="1041.500" y="975.500" width="18" height="17" fill="url(#org)"/>
<rect x="1045.500" y="979.500" width="12" height="9" fill="#f8e2b0" stroke="#6b5a3d"/><path d="M1049.500 980v8M1053.500 980v8M1046 984h11" stroke="#6b5a3d"/>
<rect x="1063.500" y="979.500" width="11" height="10" fill="#d4d8de" stroke="#666"/><rect x="1066.500" y="981.500" width="5" height="6" fill="#eee" stroke="#888"/>
<rect x="1081.500" y="978.500" width="12" height="10" fill="#b8bcc2" stroke="#666"/><rect x="1084.500" y="978.500" width="3" height="6" fill="#fff" stroke="#666"/><rect x="1088.500" y="978.500" width="4" height="6" fill="#fff" stroke="#666"/>
<text x="1105" y="988" textLength="28" lengthAdjust="spacingAndGlyphs" style="fill:#1e3a68">100%</text>
<path d="M1156 983.500H1260" stroke="#eaf2fc" stroke-width="1"/><path d="M1156 984.500H1260" stroke="#5d80b2"/>
<circle cx="1150" cy="984" r="7.500" fill="#d7e2f0" stroke="#6b84a8"/><path d="M1146 984.500h8" stroke="#334c70" stroke-width="2"/>
<circle cx="1267" cy="984" r="7.500" fill="#d7e2f0" stroke="#6b84a8"/><path d="M1263 984.500h8M1267 980.500v8" stroke="#334c70" stroke-width="2"/>
<path d="M1203.500 977.500h8v9l-4 3-4-3Z" fill="#dce6f3" stroke="#5d7aa3"/>

<!-- taskbar -->
<rect x="0" y="995" width="1280" height="29" fill="#d4d0c8"/>
<path d="M0 995.500H1280" stroke="#eeeae2"/>
<g>
<path d="M2.500 1019.500V998.500H53" fill="#d4d0c8" stroke="#fff"/><rect x="3" y="999" width="50" height="20" fill="url(#tbtn)"/><path d="M53 998V1020H2" fill="none" stroke="#404040" stroke-width="1.500"/>
<rect x="58" y="998" width="159" height="22" fill="url(#tbtn)"/><path d="M58.500 1020V998.500H217" fill="none" stroke="#fff"/><path d="M217 998V1020H58" fill="none" stroke="#404040" stroke-width="1.500"/>
<rect x="221" y="998" width="159" height="22" fill="url(#tbtn)"/><path d="M221.500 1020V998.500H380" fill="none" stroke="#fff"/><path d="M380 998V1020H221" fill="none" stroke="#404040" stroke-width="1.500"/>
<rect x="384" y="998" width="159" height="22" fill="url(#tbtn)"/><path d="M384.500 1020V998.500H543" fill="none" stroke="#fff"/><path d="M543 998V1020H384" fill="none" stroke="#404040" stroke-width="1.500"/>
<rect x="547" y="998" width="159" height="22" fill="url(#dith)"/><path d="M547.500 1020V998.500H706" fill="none" stroke="#404040" stroke-width="1.500"/><path d="M706.500 998V1020H547" fill="none" stroke="#fff"/>
</g>
<g><path d="M5 1003l6-2v7l-6 1Z" fill="#e4522a"/><path d="M12 1001l6 1v6l-6-1Z" fill="#6fb32d"/><path d="M5 1010l6-1v7l-6-2Z" fill="#2d76d6"/><path d="M12 1009l6 1v7l-6-1Z" fill="#f2bf27"/></g>
<text x="22" y="1014" textLength="28" lengthAdjust="spacingAndGlyphs" style="font-weight:bold;fill:#000;font-size:12px">Пуск</text>
<circle cx="70" cy="1009" r="8" fill="#2c5ca8"/><path d="M63 1013Q64 1003 72 1002Q67 1005 70 1007Q76 1005 77 1009Q76 1017 69 1017Q64 1016 63 1013Z" fill="#e8741d"/>
<text x="81" y="1013" textLength="131" lengthAdjust="spacingAndGlyphs" class="tb">Гиперболоид — Википе...</text>
<rect x="226.500" y="1004.500" width="15" height="12" rx="1" fill="#f5da8b" stroke="#a08538"/><path d="M230.500 1008.500v-7h7l2 2v5Z" fill="#fff" stroke="#5f8bc4"/>
<text x="244" y="1013" textLength="81" lengthAdjust="spacingAndGlyphs" class="tb">Мои документы</text>
<rect x="390.500" y="1001.500" width="13" height="15" fill="#fff" stroke="#5f7ea8"/><rect x="388" y="1004" width="10" height="9" fill="#2b5fbb"/><text x="389" y="1012" style="font-size:8px;fill:#fff;font-weight:bold">W</text>
<text x="408" y="1013" textLength="126" lengthAdjust="spacingAndGlyphs" class="tb">Лабораторная работа ...</text>
<rect x="554.500" y="1001.500" width="13" height="15" fill="#fff" stroke="#5f9f6f"/><path d="M552 1005q6-3 10-1M556 1008l6 6M562 1008l-6 6" fill="none" stroke="#2f8f3f" stroke-width="2"/>
<text x="571" y="1014" textLength="133" lengthAdjust="spacingAndGlyphs" style="font-weight:bold;fill:#000;font-size:11px">Microsoft Excel - Книг...</text>
<rect x="1128" y="1001" width="12" height="17" fill="#0a2a6b"/><text x="1128" y="1014" textLength="12" lengthAdjust="spacingAndGlyphs" style="fill:#fff;font-size:11px">EN</text>
<path d="M1144.500 1020V998.500H1278" fill="none" stroke="#8a877f"/><path d="M1278.500 998V1020.500H1144" fill="none" stroke="#fff"/>
<rect x="1147" y="1004" width="16" height="11" fill="#e8131c"/><text x="1148" y="1013" textLength="14" lengthAdjust="spacingAndGlyphs" style="fill:#fff;font-size:9px;font-weight:bold;font-style:italic">ATI</text>
<path d="M1166 1003h13l-4 6 6 8h-15Z" fill="#d8342e"/><path d="M1175 1017l4-7 4 7Z" fill="#f4d43a" stroke="#6a5a1e" stroke-width=".7"/>
<path d="M1184 1006h4l5-3v14l-5-3h-4Z" fill="#e96a3c" stroke="#8a3a1a" stroke-width=".7"/><path d="M1195 1005q3 5 0 10M1197 1003q4 7 0 14" fill="none" stroke="#333"/>
<rect x="1204" y="1006" width="9" height="8" fill="#5768ba" stroke="#2f3c86"/><rect x="1209" y="1002" width="7" height="7" fill="#6f80cc" stroke="#2f3c86"/>
<circle cx="1226" cy="1008" r="5" fill="#c9c7c1" stroke="#5b5b58"/><circle cx="1226" cy="1008" r="2" fill="#777"/><path d="M1229 1014q3 1 4-1M1230 1016q4 1 6-3" fill="none" stroke="#8fa0c0"/>
<text x="1242" y="1014" textLength="28" lengthAdjust="spacingAndGlyphs" class="tb">10:32</text>
</svg>
</body></html>
